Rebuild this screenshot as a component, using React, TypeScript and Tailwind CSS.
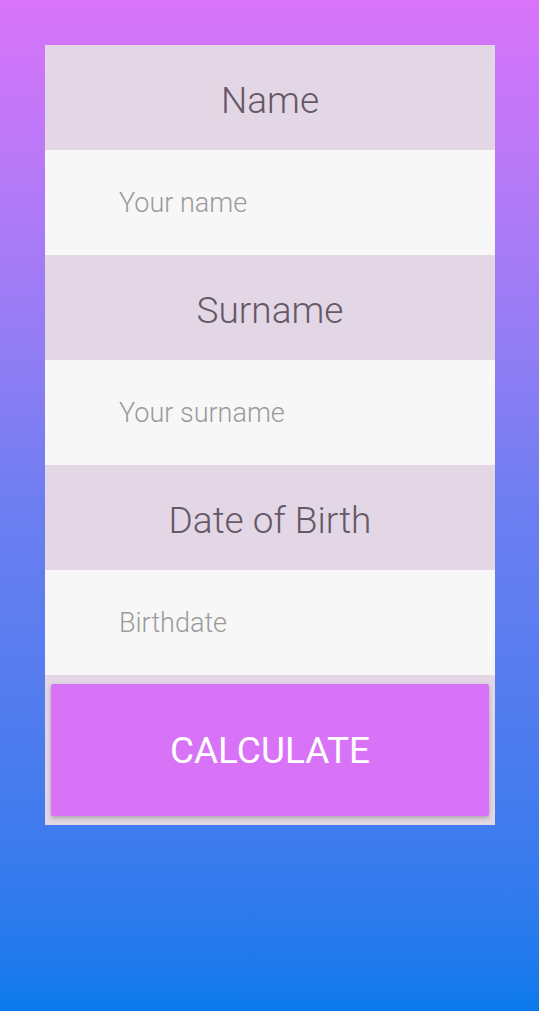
const font = "font-['Roboto','Liberation_Sans',sans-serif]";

function Header({ label }: { label: string }) {
  return (
    <div className="h-[105px] bg-[#e3d7e5] flex items-center justify-center pt-[5px]">
      <span className="text-[37px] font-light text-[#655868] leading-none">{label}</span>
    </div>
  );
}

function Field({ placeholder }: { placeholder: string }) {
  return (
    <div className="h-[105px] bg-[#f7f7f7] flex items-center pl-[74px] pt-[2px]">
      <input
        placeholder={placeholder}
        className="w-full bg-transparent outline-none text-[27px] font-light text-[#555] placeholder:text-[#9b9b9b]"
      />
    </div>
  );
}

export default function App() {
  return (
    <div className={`${font} min-h-[1011px] w-full bg-gradient-to-b from-[#d973fa] via-[#6c7ef1] to-[#0879ec] pt-[45px]`}>
      <div className="mx-[45px] w-[450px] flex flex-col">
        <Header label="Name" />
        <Field placeholder="Your name" />
        <Header label="Surname" />
        <Field placeholder="Your surname" />
        <Header label="Date of Birth" />
        <Field placeholder="Birthdate" />
        <div className="bg-[#e3d7e5] px-[6px] pt-[9px] pb-[9px]">
          <button className="w-full h-[132px] rounded-[2px] bg-[#d873f8] shadow-[0_2px_4px_rgba(0,0,0,0.25)] text-white text-[37px] pt-[2px]">
            CALCULATE
          </button>
        </div>
      </div>
    </div>
  );
}
